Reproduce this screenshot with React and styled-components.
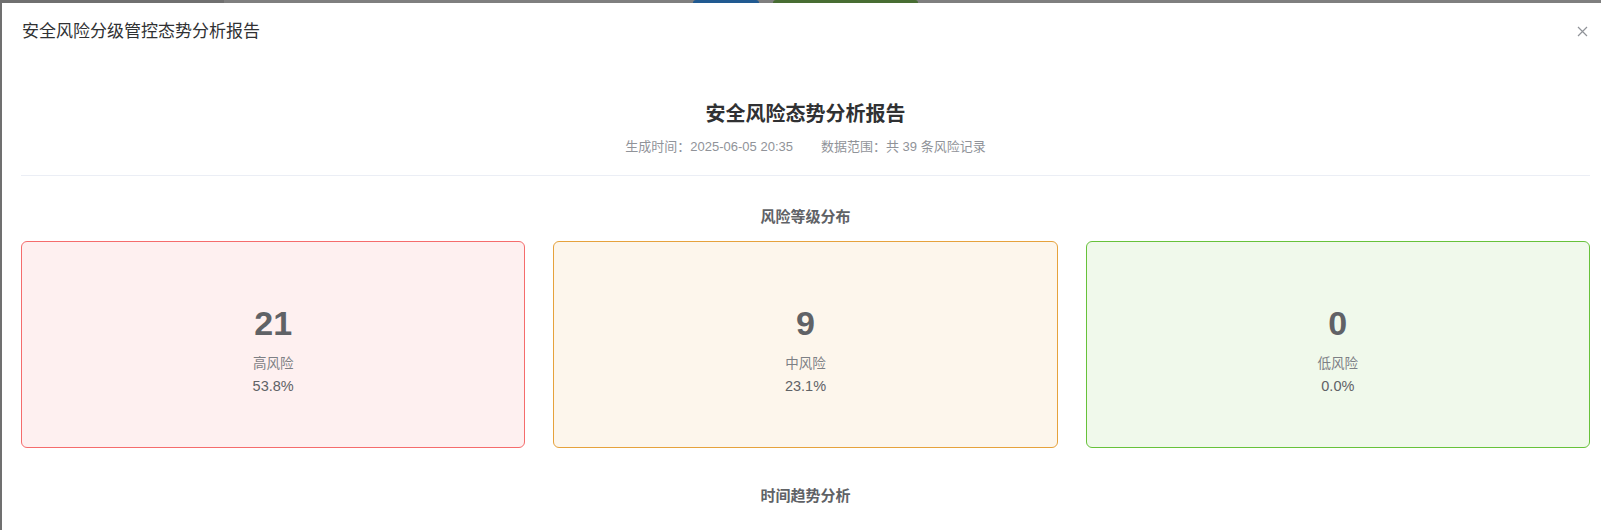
import React from "react";
import styled, { createGlobalStyle } from "styled-components";

const GlobalStyle = createGlobalStyle`
  html, body {
    margin: 0;
    padding: 0;
    height: 530px;
    overflow: hidden;
    background: #7f7f7f;
    font-family: "Liberation Sans", "Noto Sans CJK SC", sans-serif;
  }
`;

const Page = styled.div`
  display: flex;
  flex-direction: column;
  height: 530px;
  overflow: hidden;
`;

const Backdrop = styled.div`
  display: flex;
  height: 3px;
  flex: none;
  background: #7f7f7f;
`;

const BackdropPiece = styled.div`
  flex: none;
  width: ${({ $w }) => $w}px;
  margin-left: ${({ $ml }) => $ml || 0}px;
  background: ${({ $color }) => $color};
  border-radius: ${({ $round }) => ($round ? "3px 3px 0 0" : "0")};
`;

const Stage = styled.div`
  display: flex;
  flex: 1;
  min-height: 0;
`;

const Gutter = styled.div`
  flex: none;
  width: 2px;
  background: #707070;
`;

const Dialog = styled.div`
  flex: none;
  width: 1608px;
  background: #fff;
  display: flex;
  flex-direction: column;
`;

const DialogHeader = styled.div`
  display: flex;
  align-items: center;
  justify-content: space-between;
  padding: 17px 22px 9px 20px;
`;

const DialogTitle = styled.span`
  font-size: 17px;
  line-height: 24px;
  color: #303133;
`;

const CloseButton = styled.button`
  border: none;
  background: transparent;
  padding: 0;
  width: 12px;
  height: 12px;
  display: flex;
  align-items: center;
  justify-content: center;
  cursor: pointer;
  margin-top: -2px;
`;

const DialogBody = styled.div`
  padding: 47px 20px 0 19px;
`;

const ReportHeader = styled.div`
  text-align: center;
  padding-bottom: 19px;
  border-bottom: 1px solid #ebeef5;
`;

const ReportTitle = styled.h2`
  margin: 0;
  font-size: 20px;
  line-height: 28px;
  font-weight: 700;
  color: #303133;
`;

const Meta = styled.div`
  margin-top: 10px;
  display: flex;
  justify-content: center;
  gap: 28px;
  font-size: 13px;
  line-height: 18px;
  color: #909399;
`;

const Section = styled.section`
  padding: 30px 0 7px;
`;

const SectionTitle = styled.h3`
  margin: 0 0 14px;
  text-align: center;
  font-size: 15px;
  line-height: 21px;
  font-weight: 700;
  color: #606266;
`;

const StatsGrid = styled.div`
  display: grid;
  grid-template-columns: repeat(3, 1fr);
  gap: 28px;
`;

const StatCard = styled.div`
  box-sizing: border-box;
  height: 207px;
  padding-top: 61px;
  display: flex;
  flex-direction: column;
  align-items: center;
  border: 1px solid ${({ $border }) => $border};
  background: ${({ $bg }) => $bg};
  border-radius: 6px;
`;

const StatValue = styled.div`
  font-size: 34px;
  line-height: 40px;
  font-weight: 700;
  color: #606266;
`;

const StatLabel = styled.div`
  margin-top: 11px;
  font-size: 13.5px;
  line-height: 20px;
  color: #7d8085;
`;

const StatPercent = styled.div`
  margin-top: 2px;
  font-size: 14.5px;
  line-height: 20px;
  color: #606266;
`;

const levels = [
  { value: 21, label: "高风险", percent: "53.8%", border: "#f56c6c", bg: "#fef0f0" },
  { value: 9, label: "中风险", percent: "23.1%", border: "#e6a23c", bg: "#fdf6ec" },
  { value: 0, label: "低风险", percent: "0.0%", border: "#67c23a", bg: "#f0f9eb" },
];

const App = () => {
  return (
    <>
      <GlobalStyle />
      <Page>
        <Backdrop>
          <BackdropPiece $w={224} $color="#707070" />
          <BackdropPiece $w={66} $ml={469} $color="#215a91" $round />
          <BackdropPiece $w={145} $ml={14} $color="#486d33" $round />
        </Backdrop>
        <Stage>
          <Gutter />
          <Dialog>
            <DialogHeader>
              <DialogTitle>安全风险分级管控态势分析报告</DialogTitle>
              <CloseButton aria-label="关闭">
                <svg width="11" height="11" viewBox="0 0 11 11">
                  <path d="M1 1L10 10M10 1L1 10" stroke="#909399" strokeWidth="1.2" fill="none" />
                </svg>
              </CloseButton>
            </DialogHeader>
            <DialogBody>
              <ReportHeader>
                <ReportTitle>安全风险态势分析报告</ReportTitle>
                <Meta>
                  <span>生成时间：2025-06-05 20:35</span>
                  <span>数据范围：共 39 条风险记录</span>
                </Meta>
              </ReportHeader>
              <Section>
                <SectionTitle>风险等级分布</SectionTitle>
                <StatsGrid>
                  {levels.map((l) => (
                    <StatCard key={l.label} $border={l.border} $bg={l.bg}>
                      <StatValue>{l.value}</StatValue>
                      <StatLabel>{l.label}</StatLabel>
                      <StatPercent>{l.percent}</StatPercent>
                    </StatCard>
                  ))}
                </StatsGrid>
              </Section>
              <Section>
                <SectionTitle>时间趋势分析</SectionTitle>
              </Section>
            </DialogBody>
          </Dialog>
        </Stage>
      </Page>
    </>
  );
};

export default App;
